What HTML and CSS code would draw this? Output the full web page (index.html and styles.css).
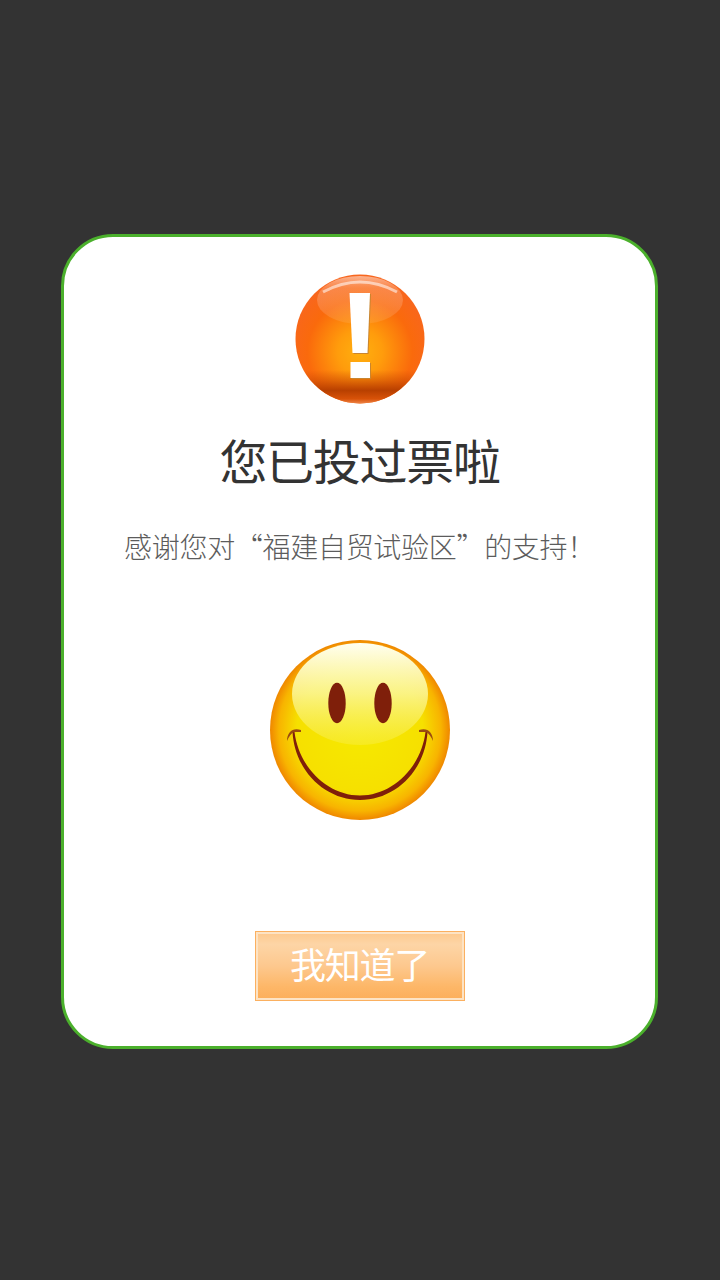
FILE: index.html
```html
<!DOCTYPE html>
<html lang="zh-CN">
<head>
<meta charset="utf-8">
<title>您已投过票啦</title>
<link rel="stylesheet" href="styles.css">
</head>
<body>
<main class="card">
  <svg class="alert" width="130" height="130" viewBox="0 0 130 130">
    <defs>
      <radialGradient id="ab" cx="50%" cy="60%" r="58%">
        <stop offset="0" stop-color="#ffb00e"/>
        <stop offset=".3" stop-color="#ff9c0c"/>
        <stop offset=".7" stop-color="#fa6a0c"/>
        <stop offset="1" stop-color="#f8661e"/>
      </radialGradient>
      <linearGradient id="as" x1="0" y1="0" x2="0" y2="1">
        <stop offset="0" stop-color="#c84800" stop-opacity="0"/>
        <stop offset=".3" stop-color="#c04400" stop-opacity=".45"/>
        <stop offset=".6" stop-color="#b84000"/>
        <stop offset=".85" stop-color="#d85208"/>
        <stop offset="1" stop-color="#f08a50"/>
      </linearGradient>
      <linearGradient id="ag" x1="0" y1="0" x2="0" y2="1">
        <stop offset="0" stop-color="#fff" stop-opacity=".5"/>
        <stop offset=".25" stop-color="#ffd8c0" stop-opacity=".28"/>
        <stop offset="1" stop-color="#fff" stop-opacity=".08"/>
      </linearGradient>
      <clipPath id="ac"><circle cx="65" cy="65" r="64.5"/></clipPath>
    </defs>
    <circle cx="65" cy="65" r="64.5" fill="url(#ab)"/>
    <rect x="0" y="96" width="130" height="34" fill="url(#as)" clip-path="url(#ac)"/>
    <ellipse cx="65" cy="26" rx="43" ry="24" fill="url(#ag)"/>
    <path d="M28 18Q65 -2 102 18" fill="none" stroke="#fff" stroke-opacity=".55" stroke-width="3"/>
    <path d="M55.5 20H76L73.5 80H58.5Z" fill="#c9852f"/>
    <path d="M54.5 19H75L72.5 79H57.5Z" fill="#fff"/>
    <rect x="56.5" y="89" width="19.5" height="16" fill="#c9852f"/>
    <rect x="55.5" y="88" width="19.5" height="16" fill="#fff"/>
  </svg>
  <h1 class="title">您已投过票啦</h1>
  <p class="note">感谢您对“福建自贸试验区”的支持！</p>
  <svg class="smile" width="180" height="180" viewBox="0 0 180 180">
    <defs>
      <radialGradient id="sb" cx="50%" cy="50%" r="50%">
        <stop offset="0" stop-color="#f6ea00"/>
        <stop offset=".7" stop-color="#f6e000"/>
        <stop offset=".9" stop-color="#f8b400"/>
        <stop offset=".975" stop-color="#f29200"/>
        <stop offset="1" stop-color="#ee8800"/>
      </radialGradient>
      <linearGradient id="sg" x1="0" y1="0" x2="0" y2="1">
        <stop offset="0" stop-color="#fffff0"/>
        <stop offset=".5" stop-color="#fbf590" stop-opacity=".9"/>
        <stop offset="1" stop-color="#f8ee50" stop-opacity=".4"/>
      </linearGradient>
    </defs>
    <circle cx="90" cy="90" r="90" fill="url(#sb)"/>
    <ellipse cx="90" cy="54" rx="68" ry="51" fill="url(#sg)"/>
    <ellipse cx="67" cy="63" rx="8.7" ry="20.3" fill="#7f1f0a"/>
    <ellipse cx="113" cy="63" rx="8.7" ry="20.3" fill="#7f1f0a"/>
    <path d="M22.5 92C25 132 56 160 90 160S155 132 157.5 92L155.5 92C151 128 122 155.5 90 155.5S29 128 24.5 92Z" fill="#7f1f0a"/>
    <path d="M17 101C17 92 23 87 31 90L31 92L24 92Q20 94 17 101Z" fill="#9a4a10"/>
    <path d="M163 101C163 92 157 87 149 90L149 92L156 92Q160 94 163 101Z" fill="#9a4a10"/>
  </svg>
  <button class="btn" type="button">我知道了</button>
</main>
</body>
</html>
```

FILE: styles.css
```css
* { box-sizing: border-box; }
html, body { margin: 0; padding: 0; }
body {
  min-height: 1280px;
  background: #333;
  padding: 234px 0 0 61px;
  font-family: "Noto Sans CJK SC", "Liberation Sans", sans-serif;
}
.card {
  width: 597px;
  height: 815px;
  background: #fff;
  border: 3px solid #4bb02c;
  border-radius: 52px;
  display: flex;
  flex-direction: column;
  align-items: center;
  padding-top: 37px;
}
.alert, .smile { display: block; flex: none; }
.title {
  margin: 25px 0 0;
  font-size: 48px;
  line-height: 60px;
  font-weight: 400;
  color: #333;
  letter-spacing: -1.3px;
  white-space: nowrap;
}
.note {
  margin: 37px 0 0;
  font-size: 28px;
  line-height: 40px;
  font-weight: 300;
  color: #5c5c5c;
  letter-spacing: -.3px;
  white-space: nowrap;
}
.smile { margin-top: 74px; }
.btn {
  margin-top: 111px;
  width: 210px;
  height: 70px;
  padding: 0 0 6px;
  border: 1px solid #fbb060;
  outline: 2px solid #fde3c4;
  outline-offset: -3px;
  background: linear-gradient(#fdc88c 0%, #fdd5a6 18%, #fdc88e 50%, #fdb768 80%, #fcae5a 100%);
  color: #fff;
  font-family: inherit;
  font-size: 36px;
  font-weight: 400;
  letter-spacing: -1.2px;
}
```
